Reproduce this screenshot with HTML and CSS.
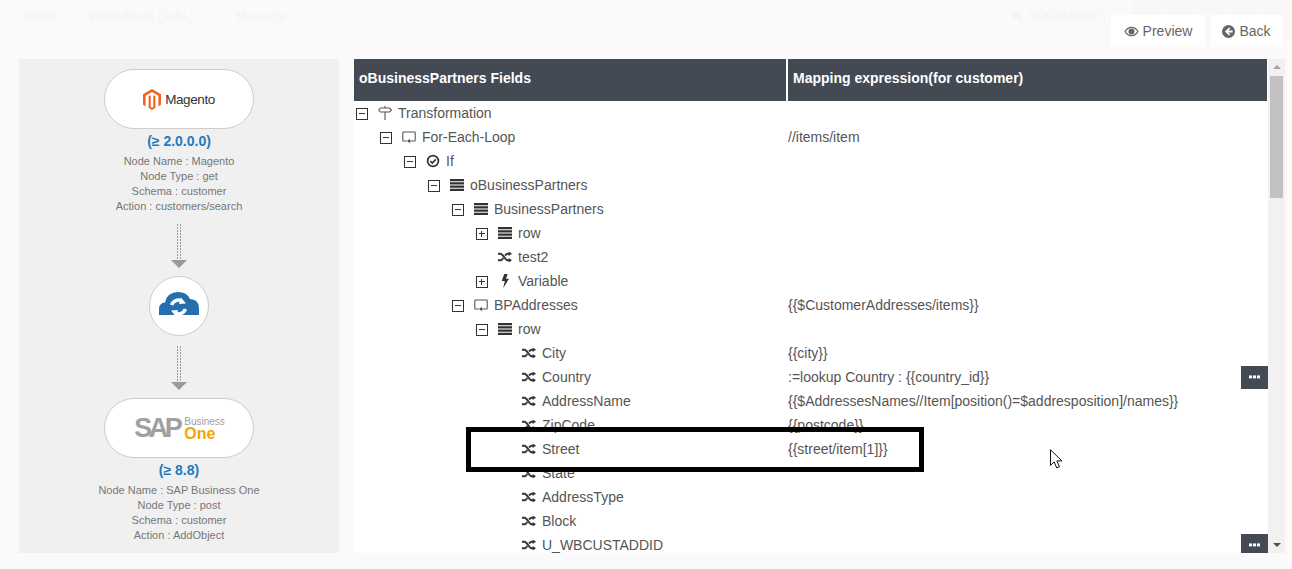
FILE: index.html
```html
<!DOCTYPE html>
<html lang="en">
  <head>
    <meta charset="UTF-8" />
    <title>Workflow mapping preview</title>
    <link rel="stylesheet" href="styles.css">
  </head>
  <body>
    <svg class="defs" width="0" height="0">
      <symbol id="i-sign" viewBox="0 0 14 14"><path d="M7 0v2M2.500 2h9l2 2-2 2h-9L.7 4zM7 6v8" fill="none" stroke="currentColor" stroke-width="1.100"/></symbol>
      <symbol id="i-loop" viewBox="0 0 14 14"><path d="M4.800 11H1.600Q.8 11 .8 10.200V2.800Q.8 2 1.600 2h10.800q.8 0 .8.800v7.400q0 .8-.8.800H7.500" fill="none" stroke="currentColor" stroke-width="1.100"/><path d="M8 8.800v4.400L5 11z"/></symbol>
      <symbol id="i-check" viewBox="0 0 14 14"><circle cx="7" cy="7" r="5.400" fill="none" stroke="currentColor" stroke-width="1.700"/><path d="M4.300 7l2 2 3.500-3.600" fill="none" stroke="currentColor" stroke-width="1.700"/></symbol>
      <symbol id="i-bars" viewBox="0 0 14 12"><path d="M0 0h14v2.300H0zM0 3.200h14v2.300H0zM0 6.500h14v2.300H0zM0 9.700h14V12H0z"/></symbol>
      <symbol id="i-random" viewBox="0 0 15 12"><path d="M0 2.500h2.500c3.500 0 4.500 7 8 7h1.500M0 9.500h2.500c1.500 0 2.400-1.200 3.200-2.500M7.600 4.500c.8-1.100 1.700-2 2.900-2h1.500" fill="none" stroke="currentColor" stroke-width="2"/><path d="M11.500 0 15 2.500 11.500 5zM11.500 7 15 9.500 11.500 12z"/></symbol>
      <symbol id="i-bolt" viewBox="0 0 8 14"><path d="M3.300 0h3.400L5 4.700h3L2.300 14l1.500-7H.7z"/></symbol>
      <symbol id="i-dots" viewBox="0 0 12 4"><path d="M0 0h3.300v3.500H0zM4.300 0h3.400v3.500H4.300zM8.700 0H12v3.500H8.700z"/></symbol>
    </svg>

    <header class="topbar">
      <nav class="nav">
        <span>Home</span>
        <span class="nav-flow">Workflows (Adv.)</span>
        <svg class="nav-chev" viewBox="0 0 8 5" width="8" height="5"><path d="M.5.500 4 4 7.500.500" fill="none" stroke="currentColor" stroke-width="1"/></svg>
        <span>Manage</span>
      </nav>
      <div class="quick">
        <span></span><span></span><span></span><span></span><span></span>
      </div>
      <div class="actions">
        <span class="bookmarks">
          <svg viewBox="0 0 8 10" width="8" height="10"><path d="M0 0h8v10L4 7 0 10z"/></svg>
          BOOKMARKS
        </span>
        <a class="btn btn-preview">
          <svg class="btn-ico" viewBox="0 0 16 12" width="15" height="11"><path d="M8 .8C4.500.8 1.800 3 .3 6c1.500 3 4.200 5.200 7.700 5.200S14.200 9 15.700 6C14.200 3 11.500.8 8 .8zm0 1.300c2.600 0 4.800 1.500 6.200 3.900-1.400 2.400-3.600 3.900-6.200 3.900S3.200 8.400 1.800 6C3.200 3.600 5.400 2.100 8 2.100z" fill-rule="evenodd"/><circle cx="8" cy="6" r="3.300"/></svg>
          Preview
        </a>
        <a class="btn btn-back">
          <svg class="btn-ico" viewBox="0 0 14 14" width="13" height="13"><path d="M7 0a7 7 0 1 0 0 14A7 7 0 0 0 7 0zm.6 2.600 1.300 1.300-2 2h4.600v2.200H6.900l2 2-1.300 1.300L3.200 7z" fill-rule="evenodd"/></svg>
          Back
        </a>
      </div>
    </header>

    <main class="content">
      <aside class="flow">
        <div class="node">
          <div class="magento">
            <svg class="magento-mark" viewBox="0 0 24 28" width="18" height="21"><path d="M12 0 0 7v14l3.500 2V9l8.500-5 8.500 5v14l3.500-2V7z M10.300 8 7.500 9.600V25l4.500 3 4.500-3V9.600L13.700 8v16L12 25l-1.700-1z" fill="#f26322"/></svg>
            <span>Magento</span>
          </div>
        </div>
        <p class="version">(≥ 2.0.0.0)</p>
        <ul class="meta">
          <li>Node Name : Magento</li>
          <li>Node Type : get</li>
          <li>Schema : customer</li>
          <li>Action : customers/search</li>
        </ul>
        <div class="link"></div>
        <div class="hub">
          <svg viewBox="0 0 40 23" width="40" height="23">
            <path d="M0 23v-6q0-6 6-6.500Q8 0 19 0q9 0 12 7 9 0 9 10v6z" fill="#2470ae"/>
            <path d="M12.600 13a7 7 0 0 1 10.400-3.800M26.400 17a7 7 0 0 1-10.400 3.800" fill="none" stroke="#fff" stroke-width="3.500"/>
            <path d="M22 5.500l5 6-7 .5zM17 24.500l-5-6 7-.5z" fill="#fff"/>
          </svg>
        </div>
        <div class="link link-last"></div>
        <div class="node">
          <div class="sap">
            <span class="sap-name">SAP</span>
            <span class="sap-sub"><span>Business</span><b>One</b></span>
          </div>
        </div>
        <p class="version">(≥ 8.8)</p>
        <ul class="meta">
          <li>Node Name : SAP Business One</li>
          <li>Node Type : post</li>
          <li>Schema : customer</li>
          <li>Action : AddObject</li>
        </ul>
      </aside>

      <section class="mapping">
        <div class="table">
          <div class="thead">
            <div>oBusinessPartners Fields</div>
            <div class="thead-second">Mapping expression(for customer)</div>
          </div>
          <div class="tbody">
            <div class="row lvl-0"><div class="field"><i class="tog minus"></i><svg class="ico ico-light"><use href="#i-sign"/></svg>Transformation</div><div class="expr"></div></div>
            <div class="row lvl-1"><div class="field"><i class="tog minus"></i><svg class="ico ico-light"><use href="#i-loop"/></svg>For-Each-Loop</div><div class="expr">//items/item</div></div>
            <div class="row lvl-2"><div class="field"><i class="tog minus"></i><svg class="ico"><use href="#i-check"/></svg>If</div><div class="expr"></div></div>
            <div class="row lvl-3"><div class="field"><i class="tog minus"></i><svg class="ico"><use href="#i-bars"/></svg>oBusinessPartners</div><div class="expr"></div></div>
            <div class="row lvl-4"><div class="field"><i class="tog minus"></i><svg class="ico"><use href="#i-bars"/></svg>BusinessPartners</div><div class="expr"></div></div>
            <div class="row lvl-5"><div class="field"><i class="tog plus"></i><svg class="ico"><use href="#i-bars"/></svg>row</div><div class="expr"></div></div>
            <div class="row lvl-5"><div class="field"><i class="tog none"></i><svg class="ico"><use href="#i-random"/></svg>test2</div><div class="expr"></div></div>
            <div class="row lvl-5"><div class="field"><i class="tog plus"></i><svg class="ico"><use href="#i-bolt"/></svg>Variable</div><div class="expr"></div></div>
            <div class="row lvl-4"><div class="field"><i class="tog minus"></i><svg class="ico ico-light"><use href="#i-loop"/></svg>BPAddresses</div><div class="expr">{{$CustomerAddresses/items}}</div></div>
            <div class="row lvl-5"><div class="field"><i class="tog minus"></i><svg class="ico"><use href="#i-bars"/></svg>row</div><div class="expr"></div></div>
            <div class="row lvl-6"><div class="field"><i class="tog none"></i><svg class="ico"><use href="#i-random"/></svg>City</div><div class="expr">{{city}}</div></div>
            <div class="row lvl-6"><div class="field"><i class="tog none"></i><svg class="ico"><use href="#i-random"/></svg>Country</div><div class="expr">:=lookup Country : {{country_id}}</div><a class="more"><svg viewBox="0 0 12 4" width="11" height="4"><use href="#i-dots"/></svg></a></div>
            <div class="row lvl-6"><div class="field"><i class="tog none"></i><svg class="ico"><use href="#i-random"/></svg>AddressName</div><div class="expr">{{$AddressesNames//Item[position()=$addresposition]/names}}</div></div>
            <div class="row lvl-6"><div class="field"><i class="tog none"></i><svg class="ico"><use href="#i-random"/></svg>ZipCode</div><div class="expr">{{postcode}}</div></div>
            <div class="row lvl-6"><div class="field"><i class="tog none"></i><svg class="ico"><use href="#i-random"/></svg>Street</div><div class="expr">{{street/item[1]}}</div></div>
            <div class="row lvl-6"><div class="field"><i class="tog none"></i><svg class="ico"><use href="#i-random"/></svg>State</div><div class="expr"></div></div>
            <div class="row lvl-6"><div class="field"><i class="tog none"></i><svg class="ico"><use href="#i-random"/></svg>AddressType</div><div class="expr"></div></div>
            <div class="row lvl-6"><div class="field"><i class="tog none"></i><svg class="ico"><use href="#i-random"/></svg>Block</div><div class="expr"></div></div>
            <div class="row lvl-6"><div class="field"><i class="tog none"></i><svg class="ico"><use href="#i-random"/></svg>U_WBCUSTADDID</div><div class="expr"></div><a class="more"><svg viewBox="0 0 12 4" width="11" height="4"><use href="#i-dots"/></svg></a></div>
            <div class="callout"></div>
            <svg class="cursor" viewBox="0 0 13 20" width="13" height="20"><path d="M.5.800v15.600l3.700-3.500 2.500 6 2.700-1.100-2.500-5.900h5z" fill="#fff" stroke="#111" stroke-width="1"/></svg>
          </div>
        </div>
        <div class="scroll">
          <span class="arrow-up"></span>
          <span class="thumb"></span>
          <span class="arrow-down"></span>
        </div>
      </section>
    </main>
  </body>
</html>
```

FILE: styles.css
```css
* {
  margin: 0;
  padding: 0;
  box-sizing: border-box;
}
body {
  height: 569px;
  overflow: hidden;
  background-color: #fafafa;
  font-family: "Liberation Sans", Arial, sans-serif;
  font-size: 14px;
  color: #555;
}
.defs {
  position: absolute;
}
ul {
  list-style: none;
}

/* top bar, washed out behind the dialog */
.topbar {
  position: relative;
  height: 59px;
  display: flex;
  justify-content: space-between;
  padding: 8px 10px 0 24px;
  background: linear-gradient(#fafafa 0 39px, #f9f9f9 39px 40px, #fafafa 40px);
}
.nav {
  display: flex;
  align-items: center;
  color: #f5f5f5;
  height: 16px;
  line-height: 16px;
}
.nav-flow {
  margin-left: 28px;
}
.nav-chev {
  margin: 0 17px;
}
.quick {
  position: absolute;
  top: 2px;
  right: 2px;
  display: flex;
  gap: 2px;
}
.quick span {
  width: 30px;
  height: 36px;
  background-color: #f8f8f8;
}
.actions {
  position: relative;
  display: flex;
  align-items: flex-start;
  gap: 6px;
  padding-top: 7px;
}
.bookmarks {
  display: flex;
  align-items: center;
  gap: 8px;
  margin: -6px -1px 0 0;
  color: #f5f5f5;
  font-size: 12px;
  fill: #f5f5f5;
}
.btn {
  height: 32px;
  display: flex;
  align-items: center;
  justify-content: center;
  gap: 4px;
  background-color: #fff;
  color: #666;
  font-size: 14px;
}
.btn-ico {
  fill: #666;
}
.btn-preview {
  width: 94px;
}
.btn-back {
  width: 71px;
}

.content {
  height: 494px;
  display: flex;
  gap: 15px;
  padding-left: 19px;
}

/* left column with the flow */
.flow {
  width: 320px;
  background-color: #f0f0f0;
  padding-top: 10px;
  display: flex;
  flex-direction: column;
  align-items: center;
}
.node {
  width: 150px;
  height: 60px;
  flex: none;
  display: flex;
  align-items: center;
  justify-content: center;
  background-color: #fff;
  border: 1px solid #ccc;
  border-radius: 30px;
}
.version {
  margin-top: 4px;
  line-height: 16px;
  font-size: 14px;
  font-weight: bold;
  color: #1f7bbd;
}
.meta {
  margin-top: 5px;
  text-align: center;
  font-size: 11px;
  line-height: 15px;
  color: #777;
}
.link {
  position: relative;
  width: 16px;
  height: 44px;
  margin-top: 10px;
  flex: none;
  background:
    repeating-linear-gradient(#999 0 2px, transparent 2px 3px) 6px 0 / 1px 36px no-repeat,
    repeating-linear-gradient(#999 0 2px, transparent 2px 3px) 9px 0 / 1px 36px no-repeat;
}
.link::after {
  content: "";
  position: absolute;
  left: 0;
  bottom: 0;
  border-left: 8px solid transparent;
  border-right: 8px solid transparent;
  border-top: 8px solid #999;
}
.link-last {
  margin-bottom: 8px;
}
.hub {
  width: 60px;
  height: 60px;
  flex: none;
  margin-top: 8px;
  padding-bottom: 6px;
  display: flex;
  align-items: center;
  justify-content: center;
  background-color: #fff;
  border: 1px solid #ccc;
  border-radius: 50%;
}
.magento {
  display: flex;
  align-items: center;
  gap: 4px;
  color: #333;
  font-size: 13.500px;
  letter-spacing: -0.4px;
}
.sap {
  display: flex;
  align-items: center;
  gap: 2px;
  padding-left: 1px;
}
.sap-name {
  font-size: 27px;
  font-weight: bold;
  letter-spacing: -3.500px;
  color: #a0a0a0;
  padding-right: 3px;
}
.sap-sub {
  display: flex;
  flex-direction: column;
  font-size: 10px;
  line-height: 11px;
  color: #a0a0a0;
}
.sap-sub b {
  font-size: 16px;
  line-height: 13px;
  color: #f7a400;
}

/* mapping tree */
.mapping {
  width: 931px;
  display: flex;
}
.table {
  width: 914px;
  display: flex;
  flex-direction: column;
  background-color: #fff;
}
.thead {
  height: 42px;
  flex: none;
  margin-right: 1px;
  display: grid;
  grid-template-columns: 432px 1fr;
  background-color: #434a54;
  color: #fff;
  font-weight: bold;
  line-height: 38px;
  padding-left: 5px;
}
.thead-second {
  border-left: 2px solid #fff;
  padding-left: 5px;
  margin-left: -5px;
}
.tbody {
  position: relative;
  flex: 1;
  overflow: hidden;
}
.row {
  height: 24px;
  display: grid;
  grid-template-columns: 434px 1fr 27px;
  align-items: center;
}
.field {
  display: flex;
  align-items: center;
}
.lvl-0 .field { padding-left: 2px; }
.lvl-1 .field { padding-left: 26px; }
.lvl-2 .field { padding-left: 50px; }
.lvl-3 .field { padding-left: 74px; }
.lvl-4 .field { padding-left: 98px; }
.lvl-5 .field { padding-left: 122px; }
.lvl-6 .field { padding-left: 146px; }
.tog {
  position: relative;
  width: 12px;
  height: 12px;
  margin: 2px 10px 0 0;
  flex: none;
  border: 1px solid #333;
  background-color: #fff;
}
.tog.none {
  border: 0;
  background: none;
}
.minus::before,
.plus::before,
.plus::after {
  content: "";
  position: absolute;
  background-color: #333;
}
.minus::before,
.plus::before {
  left: 2px;
  top: 4px;
  width: 6px;
  height: 1px;
}
.plus::after {
  left: 4px;
  top: 2px;
  width: 1px;
  height: 6px;
}
.ico {
  width: 14px;
  height: 14px;
  margin-right: 6px;
  flex: none;
  fill: #333;
  color: #333;
}
.ico-light {
  fill: #555;
  color: #555;
}
.expr {
  white-space: nowrap;
}
.more {
  width: 27px;
  height: 23px;
  display: flex;
  align-items: center;
  justify-content: center;
  background-color: #434a54;
  fill: #fff;
}

/* annotation drawn over the table */
.callout {
  position: absolute;
  left: 112px;
  top: 326px;
  width: 458px;
  height: 45px;
  border: 5px solid #000;
}
.cursor {
  position: absolute;
  left: 696px;
  top: 348px;
}

.scroll {
  position: relative;
  width: 17px;
  background-color: #f1f1f1;
}
.thumb {
  position: absolute;
  left: 2px;
  top: 17px;
  width: 13px;
  height: 122px;
  background-color: #c1c1c1;
}
.arrow-up,
.arrow-down {
  position: absolute;
  left: 5px;
  border-left: 4px solid transparent;
  border-right: 4px solid transparent;
}
.arrow-up {
  top: 6px;
  border-bottom: 4px solid #a3a3a3;
}
.arrow-down {
  bottom: 6px;
  border-top: 4px solid #505050;
}
```
